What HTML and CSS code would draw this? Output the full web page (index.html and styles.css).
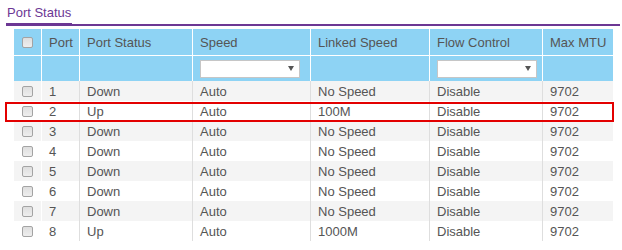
FILE: index.html
```html
<!DOCTYPE html>
<html>
<head>
<meta charset="utf-8">
<link rel="stylesheet" href="styles.css">
</head>
<body>
<div class="page">
  <div class="tabs"><span class="tab">Port Status</span></div>
  <div class="table">
    <div class="row head">
      <div class="cell cb"><input type="checkbox" class="chk"></div>
      <div class="cell">Port</div>
      <div class="cell">Port Status</div>
      <div class="cell">Speed</div>
      <div class="cell">Linked Speed</div>
      <div class="cell">Flow Control</div>
      <div class="cell">Max MTU</div>
    </div>
    <div class="row filter">
      <div class="cell cb"></div>
      <div class="cell"></div>
      <div class="cell"></div>
      <div class="cell"><span class="select"></span></div>
      <div class="cell"></div>
      <div class="cell"><span class="select"></span></div>
      <div class="cell"></div>
    </div>
    <div class="row odd">
      <div class="cell cb"><input type="checkbox" class="chk"></div>
      <div class="cell">1</div><div class="cell">Down</div><div class="cell">Auto</div>
      <div class="cell">No Speed</div><div class="cell">Disable</div><div class="cell">9702</div>
    </div>
    <div class="row hl">
      <div class="cell cb"><input type="checkbox" class="chk"></div>
      <div class="cell">2</div><div class="cell">Up</div><div class="cell">Auto</div>
      <div class="cell">100M</div><div class="cell">Disable</div><div class="cell">9702</div>
    </div>
    <div class="row odd">
      <div class="cell cb"><input type="checkbox" class="chk"></div>
      <div class="cell">3</div><div class="cell">Down</div><div class="cell">Auto</div>
      <div class="cell">No Speed</div><div class="cell">Disable</div><div class="cell">9702</div>
    </div>
    <div class="row">
      <div class="cell cb"><input type="checkbox" class="chk"></div>
      <div class="cell">4</div><div class="cell">Down</div><div class="cell">Auto</div>
      <div class="cell">No Speed</div><div class="cell">Disable</div><div class="cell">9702</div>
    </div>
    <div class="row odd">
      <div class="cell cb"><input type="checkbox" class="chk"></div>
      <div class="cell">5</div><div class="cell">Down</div><div class="cell">Auto</div>
      <div class="cell">No Speed</div><div class="cell">Disable</div><div class="cell">9702</div>
    </div>
    <div class="row">
      <div class="cell cb"><input type="checkbox" class="chk"></div>
      <div class="cell">6</div><div class="cell">Down</div><div class="cell">Auto</div>
      <div class="cell">No Speed</div><div class="cell">Disable</div><div class="cell">9702</div>
    </div>
    <div class="row odd">
      <div class="cell cb"><input type="checkbox" class="chk"></div>
      <div class="cell">7</div><div class="cell">Down</div><div class="cell">Auto</div>
      <div class="cell">No Speed</div><div class="cell">Disable</div><div class="cell">9702</div>
    </div>
    <div class="row">
      <div class="cell cb"><input type="checkbox" class="chk"></div>
      <div class="cell">8</div><div class="cell">Up</div><div class="cell">Auto</div>
      <div class="cell">1000M</div><div class="cell">Disable</div><div class="cell">9702</div>
    </div>
  </div>
</div>
</body>
</html>
```
FILE: styles.css
```css
* { box-sizing: border-box; }
body {
  margin: 0;
  font-family: "Liberation Sans", Arial, sans-serif;
  font-size: 13px;
  color: #555;
  background: #fff;
}
.page { padding: 0 2px 0 6px; }
.tabs {
  display: flex;
  align-items: flex-end;
  padding-top: 5px;
  border-bottom: 2px solid #6c3794;
}
.tab {
  line-height: 15px;
  width: 66px;
  padding: 0 1px 3px;
  border-bottom: 3px solid #6c3794;
  margin-bottom: -2px;
  color: #6c3794;
  white-space: nowrap;
}
.table {
  margin: 3px 0 0 8px;
  width: 599px;
}
.row {
  display: grid;
  grid-template-columns: 28px 38px 113px 118px 119px 113px 70px;
  height: 20px;
}
.cell {
  display: flex;
  align-items: center;
  padding-left: 7px;
  border-right: 1px solid #dedede;
  white-space: nowrap;
  line-height: 15px;
}
.cell:last-child { border-right: 0; }
.cell.cb {
  justify-content: center;
  padding: 0;
  border-right-color: #fff;
}
.head {
  height: 27px;
  background: #8ed3f4;
  border-bottom: 1px solid #fff;
}
.filter {
  height: 25px;
  background: #8ed3f4;
}
.head .cell, .filter .cell { border-right-color: #fff; }
.odd { background: #f4f4f4; }
.hl { position: relative; }
.hl::after {
  content: "";
  position: absolute;
  left: -9px;
  right: -1px;
  top: 1px;
  bottom: -1px;
  border: 2px solid #e30000;
  pointer-events: none;
}
.chk {
  appearance: none;
  -webkit-appearance: none;
  width: 11px;
  height: 11px;
  margin: 0;
  border: 1px solid #a3a3a3;
  border-radius: 2px;
  background: linear-gradient(#dedede, #eeeeee);
}
.select {
  display: flex;
  justify-content: flex-end;
  align-items: center;
  width: 100px;
  height: 18px;
  padding-right: 5px;
  background: #fff;
  border: 1px solid #c6c6c6;
}
.select::after {
  content: "";
  border-top: 5px solid #555;
  border-left: 3px solid transparent;
  border-right: 3px solid transparent;
}
```
